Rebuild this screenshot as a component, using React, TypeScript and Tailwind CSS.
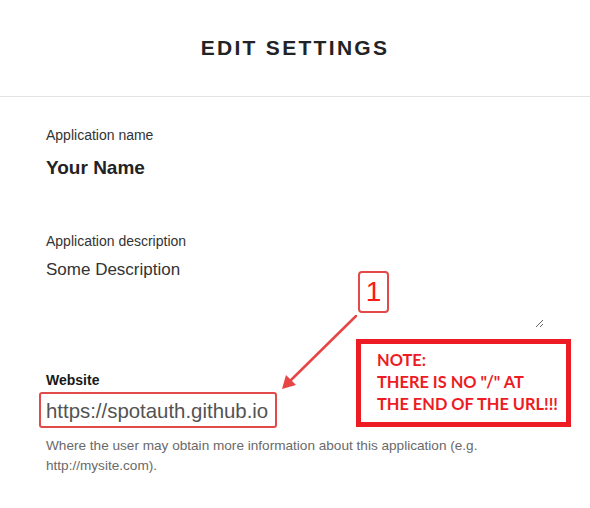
import { useState } from 'react'

const body = { fontFamily: '"Liberation Sans", Arial, sans-serif' }

function Callouts() {
  return (
    <>
      <div className="absolute left-[358px] top-[271px] w-[31px] h-[42px] rounded-[4px] border-2 border-[#e24a4a] bg-white flex items-center justify-center">
        <span className="text-[28px] leading-none text-[#ff1a1a]" style={body}>1</span>
      </div>
      <svg className="absolute left-0 top-0 pointer-events-none" width="590" height="508" viewBox="0 0 590 508">
        <line x1="356" y1="316" x2="289" y2="382" stroke="#e84545" strokeWidth="2.5" strokeLinecap="round" />
        <path d="M282 389 L286 375 L296 385 Z" fill="#e84545" />
      </svg>
      <div
        className="absolute left-[356px] top-[339px] w-[215px] h-[88px] border-[5px] border-[#ed1c24] bg-white pl-[16px] pt-[5px]"
        style={{ fontFamily: 'Lato, "Liberation Sans", sans-serif' }}
      >
        <div className="text-[16.4px] leading-[22px] font-bold text-[#ed1c24]">
          <div>NOTE:</div>
          <div>THERE IS NO "/" AT</div>
          <div>THE END OF THE URL!!!</div>
        </div>
      </div>
    </>
  )
}

export default function App() {
  const [desc, setDesc] = useState('Some Description')

  return (
    <div className="relative w-[590px] h-[508px] overflow-hidden bg-white" style={body}>
      <div className="h-[97px] flex items-center justify-center border-b border-[#e3e3e3]">
        <h1 className="text-[21px] leading-[28px] font-bold tracking-[2.3px] text-[#222326]">EDIT SETTINGS</h1>
      </div>

      <div className="px-[46px] pt-[28px]">
        <label className="block text-[14px] leading-[20px] text-[#333]">Application name</label>
        <div className="mt-[10px] text-[19px] leading-[26px] font-bold text-[#222326]">Your Name</div>

        <label className="block mt-[50px] text-[14px] leading-[20px] text-[#333]">Application description</label>
        <textarea
          value={desc}
          onChange={e => setDesc(e.target.value)}
          className="block w-full h-[70px] mt-[7px] p-0 border-0 bg-transparent text-[17px] leading-[24px] text-[#333] outline-none"
        />

        <label className="block mt-[42px] text-[14px] leading-[20px] font-bold text-[#181818]">Website</label>
        <div className="mt-[2px] ml-[-7px] inline-block h-[36px] rounded-[3px] border-2 border-[#e24a4a] pl-[5px] pr-[7px] pt-[3px] text-[20.4px] leading-[29px] text-[#535353]">
          https://spotauth.github.io
        </div>

        <p className="mt-[8px] text-[13.6px] leading-[20px] text-[#6a6a6a]">
          Where the user may obtain more information about this application (e.g. http://mysite.com).
        </p>
      </div>

      <Callouts />
    </div>
  )
}
